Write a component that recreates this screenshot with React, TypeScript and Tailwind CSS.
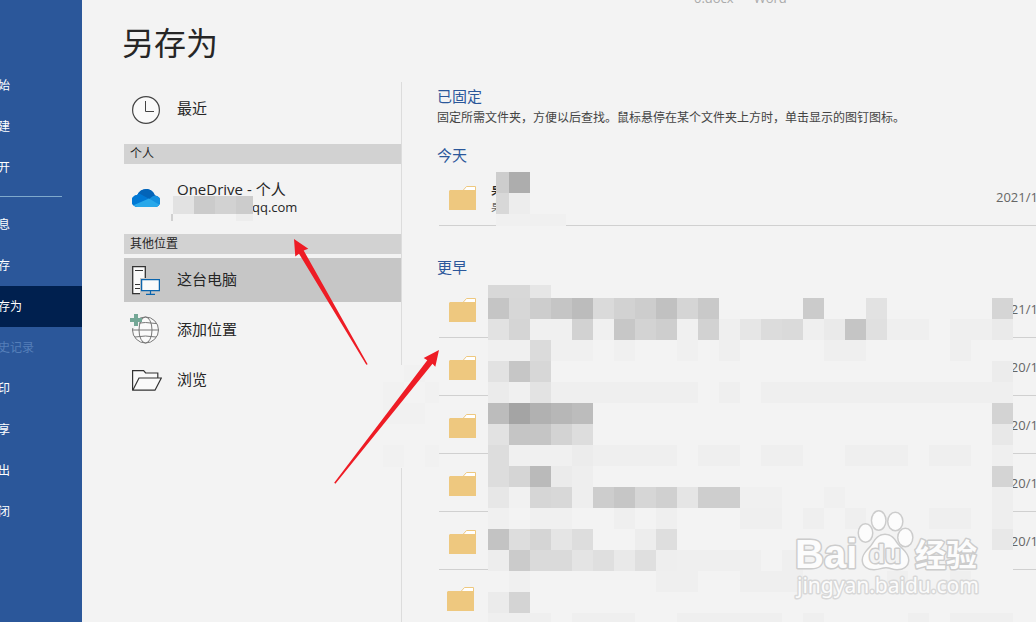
import type { ReactNode } from "react";

const NAV_TOP = ["始", "建", "开"];
const NAV_BOTTOM = ["息", "存", "存为", "史记录", "印", "享", "出", "闭"];

const EARLIER = ["2021/1/", "2020/1", "2020/1", "2020/1", "2020/1", ""];

const CELL = 21;

// One entry per mosaic row: "column:grey" or "from-to:grey"
const MOSAIC = [
  "0-1:d8 2:e6",
  "0:c5 1:d7 2:cd 3:c5 4:bc 5:da 6:d2 7:cd 8:c1 9:d5 10:c9 15:cb 18:e2 24:d5",
  "0:e2 1:d5 2-3:f0 4:d2 5:f0 6:c7 7:d3 8:ce 9:f0 10:d2 11:ef 12:e6 13:dc 14:da 15:ef 16:ea 17:c5 18:e0 19-20:ef 22-23:ef 24:ea",
  "0-1:f0 2:db 3-4:f0 6:f0 9:f0 11:ef 16-17:ef 22:ef",
  "0:e2 1:c6 2:d7 24:ec",
  "0:eb 1:f0 2:e3 3-9:ef 11:ef 13-24:ef",
  "0:bc 1:a4 2:b1 3:b7 4:bc 24:d3",
  "0:e2 1-2:c5 3:d3 4:dd 24:e8",
  "0:dd 1-3:f0 4:ec 5-8:ef 10-11:ef 13-14:ef 17-19:ef 21-22:ef 24:ef",
  "0:dd 1:d5 2:ba 3:eb 4:ee 24:d4",
  "0:e7 1:f1 2:d6 3:d8 4:ee 5:cd 6:c6 7:d6 8:d0 9:e5 10-11:ce 12-13:f0 16:f0 24:ee",
  "0:f0 2-3:f0 6:ef 8:ef 12-13:ef 15:ef 17:ef 21-22:ef 24:ee",
  "0:c3 1:dd 2:d5 3:e5 4:dd 7:ed 8:de 24:e8",
  "0:ed 1:cb 2-3:da 4:e4 5:df 6:e9 7:df 8:ee 9-12:ef 14:ef",
  "1:f0 8-9:ef 12-14:ef 19:ef 22:ef",
  "0:eb 1:d4",
  "0-2:ef 4-6:ef 9-13:ef 15:ef 20:ef 22-24:ef",
];

function Mosaic() {
  return (
    <svg
      className="pointer-events-none absolute left-[49px] top-[5px]"
      width={525}
      height={349}
      shapeRendering="crispEdges"
      aria-hidden="true"
    >
      <rect width={525} height={349} fill="#f3f3f3" />
      {MOSAIC.map((row, r) =>
        row.split(" ").map((entry) => {
          const [range, grey] = entry.split(":");
          const [from, to = from] = range.split("-");
          // first row is cut short
          const y = r === 0 ? 0 : 13 + (r - 1) * CELL;
          return (
            <rect
              key={`${r}-${range}`}
              x={Number(from) * CELL}
              y={y}
              width={(Number(to) - Number(from) + 1) * CELL}
              height={r === 0 ? 13 : CELL}
              fill={`#${grey}${grey}${grey}`}
            />
          );
        })
      )}
    </svg>
  );
}

function ClockIcon() {
  return (
    <svg width="28" height="30" viewBox="0 -2 28 30" fill="none" stroke="#444" className="shrink-0">
      <circle cx="14" cy="14" r="13.4" fill="#fafafa" strokeWidth="1.2" />
      <path d="M13.5 5v10.5H22" />
    </svg>
  );
}

function CloudIcon() {
  return (
    <svg width="28" height="18" viewBox="0 0 28 18" className="shrink-0">
      <defs>
        <clipPath id="cloud">
          <path d="M6 18a6 6 0 0 1-.8-12C7 2 10.500 0 14 0c4.200 0 7.700 2.600 8.800 6.400A5.800 5.800 0 0 1 22.500 18Z" />
        </clipPath>
      </defs>
      <g clipPath="url(#cloud)">
        <rect width="28" height="18" fill="#0f78d4" />
        <path d="M4 0h20v8l-7 3L5 5Z" fill="#0364b8" />
        <path d="M0 5c4-1.500 8-.6 10.500 1.300L17.500 10 8 18H0Z" fill="#0078d4" />
        <path d="M17.500 10c3-3.500 7-4.300 10.500-2.500V18H16Z" fill="#1490df" />
        <path d="M2 16 17 9.500l10 6V18H2Z" fill="#28a8ea" />
      </g>
    </svg>
  );
}

function ComputerIcon() {
  return (
    <svg width="28" height="30" viewBox="0 -1 28 30" fill="#fafafa" className="shrink-0">
      <path d="M.7.7h12.600v27H.7Z" stroke="#333" strokeWidth="1.300" />
      <path d="M3 4.500h8M3 18.500h5M3 22.500h5" stroke="#333" />
      <path d="M8 12h20v17H8Z" fill="#c6c6c6" />
      <path d="M9.600 13.600h17.800v11H9.600Z" stroke="#0a64ad" strokeWidth="1.300" />
      <path d="M18.500 25v3.500M14 28.400h9" stroke="#0a64ad" strokeWidth="1.200" />
    </svg>
  );
}

function GlobeIcon() {
  return (
    <svg width="28" height="32" viewBox="0 0 28 32" fill="none" className="shrink-0 overflow-visible">
      <g stroke="#777">
        <circle cx="13.500" cy="16" r="13" fill="#fafafa" />
        <ellipse cx="13.500" cy="16" rx="6.500" ry="13" />
        <path d="M.5 16h26M3 9.500q10.500-2 21 0M3 23q10.500-2 21 0" />
      </g>
      <path d="M-3 0h10v12h-4v2h-6Z" fill="#f3f3f3" />
      <path d="M2 0h4v4h4v4H6v4H2V8h-4V4h4Z" fill="#74a796" />
    </svg>
  );
}

function OpenFolderIcon() {
  return (
    <svg width="30" height="22" viewBox="0 -1 30 22" fill="#fafafa" stroke="#333" strokeWidth="1.200" className="-mr-0.5 shrink-0">
      <path d="M.6 20V.6h11l2 2.400h12.200v5" />
      <path d="M.8 20.200 7 8h22.300L23 20.200Z" />
    </svg>
  );
}

function FolderIcon() {
  return (
    <svg width="27" height="24" viewBox="0 0 27 24" className="shrink-0">
      <path d="M13.500 5 17.500.5h9V8h-13Z" fill="#fff" stroke="#eec87f" />
      <path d="M1 4h26v20H0V5Z" fill="#eec87f" />
    </svg>
  );
}

function NavItem({ label }: { label: string }) {
  const active = label === "存为";
  const disabled = label === "史记录";
  return (
    <li>
      <button
        type="button"
        disabled={disabled}
        className={`flex h-[41px] w-full items-center whitespace-nowrap text-xs ${
          active ? "bg-[#00204f]" : ""
        } ${disabled ? "text-[#557fb9]" : "text-white"}`}
      >
        <span className="-ml-0.5">{label}</span>
      </button>
    </li>
  );
}

function GroupTitle({ children }: { children: ReactNode }) {
  return <h2 className="h-5 bg-[#d2d2d2] px-1.5 text-xs leading-5">{children}</h2>;
}

function Place({ icon, label, className }: { icon: ReactNode; label: string; className: string }) {
  return (
    <button type="button" className={`flex w-full items-center gap-[17px] px-2 text-[15px] ${className}`}>
      {icon}
      <span className="pb-0.5">{label}</span>
    </button>
  );
}

function SectionTitle({ children }: { children: ReactNode }) {
  return <h2 className="text-[15px] leading-5 text-[#2b579a]">{children}</h2>;
}

function FolderRow({ date, last, children }: { date: string; last?: boolean; children?: ReactNode }) {
  return (
    <li
      className={`flex h-[58px] items-center border-b ${
        last ? "border-transparent pl-2 pt-px" : "border-[#d0d0d0] pl-2.5 pt-[3px]"
      }`}
    >
      <FolderIcon />
      <div className="flex-1 pl-[15px]">{children}</div>
      <span className="w-10 shrink-0 whitespace-nowrap text-[13px] text-[#666]">{date}</span>
    </li>
  );
}

function Watermark() {
  return (
    <svg
      className="pointer-events-none absolute bottom-5 right-[52px]"
      width={194}
      height={94}
      viewBox="790 508 194 94"
      fill="#fcfcfc"
      stroke="#cccccc"
      strokeWidth={3}
      strokeLinejoin="round"
      paintOrder="stroke"
    >
      <text x="795" y="568" fontSize="40" fontWeight="700" className="font-['Liberation_Sans']">
        Bai
      </text>
      <ellipse cx="865.500" cy="533" rx="6.500" ry="8.500" />
      <ellipse cx="878.700" cy="520.500" rx="6.500" ry="9" />
      <ellipse cx="895.300" cy="521.500" rx="6.800" ry="8.500" />
      <ellipse cx="905.300" cy="537.500" rx="6.800" ry="8.500" />
      <path d="M885 535c6 0 9 4 12 9 4 5 11 9 11 16 0 6-5 9-11 9-4 0-7-2-11-2s-7 2-12 2c-6 0-11-3-11-9 0-7 7-11 10-16 3-5 6-9 12-9Z" />
      <text x="869" y="563" fontSize="26" fontWeight="700" fill="#f3f3f3" className="font-['Liberation_Sans']">
        du
      </text>
      <text x="915" y="566" fontSize="31" fontWeight="700" className="font-['Noto_Sans_CJK_SC']">
        经验
      </text>
      <text x="797" y="593" fontSize="21" stroke="#d8d8d8" className="font-['Noto_Sans']">
        jingyan.baidu.com
      </text>
    </svg>
  );
}

function Arrows() {
  return (
    <svg className="pointer-events-none absolute left-[290px] top-[235px]" width={155} height={255} viewBox="290 235 155 255" fill="#ee1c25">
      <path d="M294 239 308.300 248.700 303.700 250.500 367.700 364.200 366.300 364.800 299 253.700 295.300 256.500Z" />
      <path d="M439 350 435.300 366.700 432.500 363.700 335.400 483.700 334.200 482.700 427.300 360.300 423.700 358Z" />
    </svg>
  );
}

export default function App() {
  return (
    <div className="relative flex h-screen overflow-hidden bg-[#f3f3f3] font-['Open_Sans','Noto_Sans_CJK_SC',sans-serif] text-[#262626]">
      <nav className="w-[82px] shrink-0 overflow-hidden bg-[#2b579a] pt-[65px]">
        <ul>
          {NAV_TOP.map((label) => (
            <NavItem key={label} label={label} />
          ))}
        </ul>
        <hr className="mb-[7px] mr-5 mt-2 border-[#7fa9cc]" />
        <ul>
          {NAV_BOTTOM.map((label) => (
            <NavItem key={label} label={label} />
          ))}
        </ul>
      </nav>

      <main className="flex min-w-0 flex-1 flex-col">
        <header className="flex h-1.5 items-end gap-5 overflow-hidden pl-[612px] text-[13px] leading-4 text-[#aaa]">
          <span>0.docx</span>
          <span>Word</span>
        </header>
        <h1 className="mt-[17px] pl-10 text-[32px] font-normal leading-10">另存为</h1>

        <div className="mt-[19px] flex min-h-0 flex-1">
          <section className="relative w-80 shrink-0 border-r border-[#dcdcdc] pl-[42px]">
            <Place className="mb-2 h-[54px]" icon={<ClockIcon />} label="最近" />
            <GroupTitle>个人</GroupTitle>
            <button type="button" className="relative flex h-[70px] w-full items-center gap-[17px] px-2 pb-0.5 text-left">
              <CloudIcon />
              <span className="flex flex-col pb-0.5">
                <span className="text-[15px] leading-5">OneDrive - 个人</span>
                <span className="pl-[75px] text-[13px] leading-4">qq.com</span>
              </span>
              <svg className="absolute left-[47px] top-8" width={82} height={25} shapeRendering="crispEdges">
                <path d="M2 0h21v18H2Z" fill="#e2e2e2" />
                <path d="M23 0h21v18H23Z" fill="#cbcbcb" />
                <path d="M44 0h21v18H44Z" fill="#d2d2d2" />
                <path d="M65 0h17v18H65Z" fill="#cccccc" />
                <path d="M0 18h2v7H0Z" fill="#d0d0d0" />
                <path d="M65 18h17v7H65Z" fill="#ededed" />
              </svg>
            </button>
            <GroupTitle>其他位置</GroupTitle>
            <Place className="mb-[3px] mt-1 h-11 bg-[#c6c6c6]" icon={<ComputerIcon />} label="这台电脑" />
            <Place className="h-[50px]" icon={<GlobeIcon />} label="添加位置" />
            <Place className="h-[50px]" icon={<OpenFolderIcon />} label="浏览" />
            <svg className="absolute left-[301px] top-[283px]" width={56} height={103} shapeRendering="crispEdges">
              <rect width={56} height={103} fill="#f3f3f3" />
              <path
                d="M21 0h21v17H21ZM0 17h21v21H0ZM42 17h14v21H42ZM0 38h42v21H0ZM0 80h21v22H0ZM42 80h14v22H42Z"
                fill="#f1f1f1"
              />
            </svg>
          </section>

          <section className="min-w-0 flex-1 pl-[35px] pt-1">
            <SectionTitle>已固定</SectionTitle>
            <p className="mt-0.5 whitespace-nowrap text-xs leading-5 text-[#444]">
              固定所需文件夹，方便以后查找。鼠标悬停在某个文件夹上方时，单击显示的图钉图标。
            </p>

            <div className="mt-[17px]">
              <SectionTitle>今天</SectionTitle>
              <ul className="relative ml-0.5 mt-[3px]">
                <FolderRow date="2021/1/">
                  <p className="text-[13px] font-medium leading-[18px]">桌</p>
                  <p className="text-xs leading-[18px] text-[#666]">桌</p>
                </FolderRow>
                <svg className="absolute left-[57px] top-1" width={70} height={54} shapeRendering="crispEdges">
                  <path d="M0 0h13v21H0Z" fill="#cdcdcd" />
                  <path d="M13 0h21v21H13Z" fill="#adadad" />
                  <path d="M0 21h13v21H0Z" fill="#d8d8d8" />
                  <path d="M13 21h21v21H13Z" fill="#ededed" />
                  <path d="M0 42h70v12H0Z" fill="#f0f0f0" />
                </svg>
              </ul>
            </div>

            <div className="mt-[31px]">
              <SectionTitle>更早</SectionTitle>
              <ul className="relative ml-0.5 mt-[3px]">
                {EARLIER.map((date, i) => (
                  <FolderRow key={i} date={date} last={i === EARLIER.length - 1} />
                ))}
                <Mosaic />
              </ul>
            </div>
          </section>
        </div>
      </main>

      <Arrows />
      <Watermark />
    </div>
  );
}
